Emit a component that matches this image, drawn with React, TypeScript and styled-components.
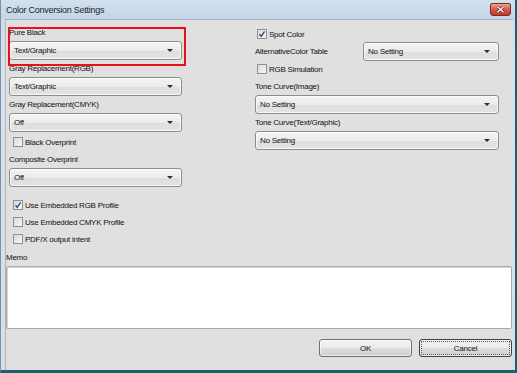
import React from 'react';
import styled, { createGlobalStyle } from 'styled-components';

const GlobalStyle = createGlobalStyle`
    html, body {
        margin: 0;
        padding: 0;
        background: #1d5f6f;
    }
    body {
        font-family: "Liberation Sans", Tahoma, Arial, sans-serif;
        font-size: 8px;
        letter-spacing: -0.25px;
        color: #111;
    }
`;

const Window = styled.div`
    position: relative;
    width: 517px;
    height: 373px;
    box-sizing: border-box;
    display: flex;
    flex-direction: column;
    background: linear-gradient(#c9d9ea, #d6e2ee 60px, #d3dfeb);
    border-left: 1px solid #7d8fa3;
    border-right: 2px solid #1d5f6f;
    border-bottom: 3px solid #1d5f6f;
`;

const TitleBar = styled.div`
    height: 19px;
    display: flex;
    align-items: center;
    justify-content: space-between;
    padding-left: 5px;
    background: linear-gradient(#d3e1ef, #c3d5e8);
`;

const Title = styled.span`
    font-size: 9px;
    color: #1e1e1e;
`;

const CloseButton = styled.div`
    width: 19px;
    height: 11px;
    margin: 0 4px 3px 0;
    align-self: flex-end;
    border: 1px solid #7a2d26;
    border-radius: 2px 2px 3px 3px;
    background: linear-gradient(#eba597, #d6584a 50%, #c2392e);
    display: flex;
    align-items: center;
    justify-content: center;
`;

const Client = styled.div`
    flex: 1;
    margin: 0 2px 0 4px;
    display: flex;
    flex-direction: column;
    background: #e0e0e0;
    border-top: 1px solid #a3afbc;
    border-left: 1px solid #b4b4b4;
`;

const Columns = styled.div`
    display: flex;
    gap: 73px;
    padding: 7px 0 0 3px;
`;

const Column = styled.div<{ $width: number }>`
    width: ${p => p.$width}px;
    display: flex;
    flex-direction: column;
`;

const Label = styled.div<{ $top?: number }>`
    height: 12px;
    line-height: 12px;
    margin-top: ${p => p.$top ?? 0}px;
    white-space: nowrap;
`;

const SelectBox = styled.div<{ $top?: number; $width?: number }>`
    box-sizing: border-box;
    height: 19px;
    width: ${p => (p.$width ? `${p.$width}px` : '100%')};
    margin-top: ${p => p.$top ?? 2}px;
    display: flex;
    align-items: center;
    justify-content: space-between;
    padding: 0 8px 0 4px;
    border: 1px solid #8d8d8d;
    border-radius: 3px;
    background: linear-gradient(#f4f4f4, #ebebeb 50%, #dedede 51%, #e3e3e3);
    box-shadow: inset 0 0 0 1px rgba(255, 255, 255, 0.7);
`;

const Arrow = styled.span`
    width: 0;
    height: 0;
    border-left: 3px solid transparent;
    border-right: 3px solid transparent;
    border-top: 3px solid #2c2c2c;
`;

const CheckRow = styled.div<{ $top?: number; $indent?: number }>`
    height: 14px;
    margin-top: ${p => p.$top ?? 0}px;
    padding-left: ${p => p.$indent ?? 4}px;
    display: flex;
    align-items: center;
    gap: 2px;
    white-space: nowrap;
`;

const Box = styled.span`
    box-sizing: border-box;
    width: 10px;
    height: 10px;
    border: 1px solid #8e8f8f;
    background: linear-gradient(135deg, #d9dadb, #f6f6f6);
    display: flex;
    align-items: center;
    justify-content: center;
`;

const InlineRow = styled.div<{ $top?: number }>`
    height: 19px;
    margin-top: ${p => p.$top ?? 0}px;
    display: flex;
    align-items: center;
    justify-content: space-between;
`;

const MemoSection = styled.div`
    display: flex;
    flex-direction: column;
    padding-right: 1px;
    margin-top: 6px;
`;

const Memo = styled.div`
    height: 63px;
    margin-top: 2px;
    box-sizing: border-box;
    background: #fff;
    border: 1px solid #a9a9a9;
    border-radius: 2px;
    box-shadow: inset 1px 1px 0 #d8d8d8;
`;

const ButtonRow = styled.div`
    display: flex;
    justify-content: flex-end;
    gap: 7px;
    margin-top: 10px;
    padding-right: 1px;
`;

const Button = styled.div<{ $default?: boolean }>`
    box-sizing: border-box;
    width: 93px;
    height: 18px;
    display: flex;
    align-items: center;
    justify-content: center;
    border: 1px solid ${p => (p.$default ? '#3f3f3f' : '#707070')};
    border-radius: 3px;
    background: linear-gradient(#f2f2f2, #ebebeb 50%, #dddddd 51%, #cfcfcf);
    box-shadow: inset 0 0 0 1px rgba(255, 255, 255, 0.6);
    outline: ${p => (p.$default ? '1px dotted #555' : 'none')};
    outline-offset: -3px;
`;

const Highlight = styled.div`
    position: absolute;
    left: 7px;
    top: 27px;
    width: 178px;
    height: 39px;
    box-sizing: border-box;
    border: 2px solid #e8101a;
    pointer-events: none;
`;

const Check = () => (
    <svg width="8" height="8" viewBox="0 0 8 8">
        <path d="M1.5 4.3 L3.2 6.3 L6.6 1.4" fill="none" stroke="#2b4b7d" strokeWidth="1.4" />
    </svg>
);

const Select = ({ value, top, width }: { value: string; top?: number; width?: number }) => (
    <SelectBox $top={top} $width={width}>
        <span>{value}</span>
        <Arrow />
    </SelectBox>
);

const CheckBox = ({ label, checked, top, indent }: { label: string; checked?: boolean; top?: number; indent?: number }) => (
    <CheckRow $top={top} $indent={indent}>
        <Box>{checked && <Check />}</Box>
        <span>{label}</span>
    </CheckRow>
);

const App = () => {
    return (
        <>
            <GlobalStyle />
            <Window>
                <TitleBar>
                    <Title>Color Conversion Settings</Title>
                    <CloseButton>
                        <svg width="9" height="7" viewBox="0 0 9 7">
                            <path d="M1.5 0.8 L7.5 6.2 M7.5 0.8 L1.5 6.2" stroke="#5a1e18" strokeWidth="2.6" />
                            <path d="M1.5 0.8 L7.5 6.2 M7.5 0.8 L1.5 6.2" stroke="#fff" strokeWidth="1.4" />
                        </svg>
                    </CloseButton>
                </TitleBar>
                <Client>
                    <Columns>
                        <Column $width={173}>
                            <Label>Pure Black</Label>
                            <Select value="Text/Graphic" />
                            <Label $top={3}>Gray Replacement(RGB)</Label>
                            <Select value="Text/Graphic" />
                            <Label $top={3}>Gray Replacement(CMYK)</Label>
                            <Select value="Off" />
                            <CheckBox label="Black Overprint" top={3} />
                            <Label $top={5}>Composite Overprint</Label>
                            <Select value="Off" />
                            <CheckBox label="Use Embedded RGB Profile" checked top={11} />
                            <CheckBox label="Use Embedded CMYK Profile" top={3} />
                            <CheckBox label="PDF/X output intent" top={3} />
                        </Column>
                        <Column $width={244}>
                            <CheckBox label="Spot Color" checked indent={2} />
                            <InlineRow $top={1}>
                                <span>AlternativeColor Table</span>
                                <Select value="No Setting" top={0} width={136} />
                            </InlineRow>
                            <CheckBox label="RGB Simulation" top={1} indent={2} />
                            <Label $top={5}>Tone Curve(Image)</Label>
                            <Select value="No Setting" />
                            <Label $top={3}>Tone Curve(Text/Graphic)</Label>
                            <Select value="No Setting" />
                        </Column>
                    </Columns>
                    <MemoSection>
                        <Label>Memo</Label>
                        <Memo />
                    </MemoSection>
                    <ButtonRow>
                        <Button>OK</Button>
                        <Button $default>Cancel</Button>
                    </ButtonRow>
                </Client>
                <Highlight />
            </Window>
        </>
    );
};

export default App;
